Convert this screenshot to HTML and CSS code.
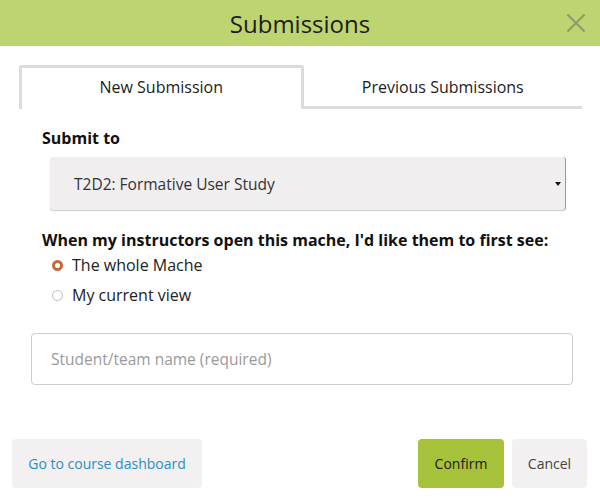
FILE: index.html
```html
<!DOCTYPE html>
<html>
<head>
<meta charset="utf-8">
<link rel="stylesheet" href="styles.css">
</head>
<body>
<div class="modal">
  <header class="head">
    <h1 class="title">Submissions</h1>
    <span class="close" aria-label="close">
      <svg width="20" height="20" viewBox="0 0 20 20"><path d="M1.5 1.5L18.5 18.5M18.5 1.5L1.5 18.5" stroke="#8a9a6a" stroke-width="2" fill="none"/></svg>
    </span>
  </header>
  <div class="tabs">
    <div class="tab active">New Submission</div>
    <div class="tab">Previous Submissions</div>
  </div>
  <div class="body">
    <div class="label">Submit to</div>
    <div class="select"><span>T2D2: Formative User Study</span><span class="caret"></span></div>
    <div class="label q">When my instructors open this mache, I'd like them to first see:</div>
    <div class="radio"><span class="dot on"></span>The whole Mache</div>
    <div class="radio"><span class="dot"></span>My current view</div>
  </div>
  <div class="input">Student/team name (required)</div>
  <footer class="foot">
    <button class="btn link">Go to course dashboard</button>
    <span class="spacer"></span>
    <button class="btn confirm">Confirm</button>
    <button class="btn cancel">Cancel</button>
  </footer>
</div>
</body>
</html>
```
FILE: styles.css
```css
* { box-sizing: border-box; }
html, body { margin: 0; padding: 0; background: #fff; }
body { font-family: "Open Sans", "Noto Sans", sans-serif; color: #222; width: 600px; height: 500px; overflow: hidden; }
.modal { display: flex; flex-direction: column; }
.head { height: 46px; background: #bdd470; display: flex; align-items: center; justify-content: center; position: relative; }
.title { margin: 0; font-weight: 400; font-size: 24px; color: #1c1c1c; }
.close { position: absolute; right: 14px; top: 13px; width: 20px; height: 20px; }
.tabs { display: flex; margin: 19px 18px 0 19px; height: 44px; }
.tab { flex: 1; display: flex; align-items: flex-start; justify-content: center; font-size: 16px; color: #1c1c1c; border-bottom: 3px solid #dcdcdc; padding-top: 11px; }
.tab.active { border: 3px solid #dcdcdc; border-bottom: none; border-radius: 3px 3px 0 0; padding-top: 8px; }
.body { padding: 19px 0 0 42px; }
.label { font-weight: 700; font-size: 16px; color: #111; height: 20px; line-height: 20px; }
.select { margin: 9px 0 0 8px; width: 516px; height: 53px; background: #f0eeee; border-right: 1px solid #9a9a9a; border-radius: 3px; box-shadow: 0 1px 1px #ccc; display: flex; align-items: center; justify-content: space-between; padding: 0 4px 0 24px; font-size: 15.5px; color: #333; }
.caret { width: 0; height: 0; border-left: 3px solid transparent; border-right: 3px solid transparent; border-top: 4px solid #111; }
.q { margin-top: 20px; }
.radio { display: flex; align-items: center; font-size: 16px; color: #222; height: 30px; margin-left: 10px; }
.dot { width: 11px; height: 11px; border-radius: 50%; border: 1px solid #bbb; background: #fff; margin-right: 9px; margin-top: 1px; }
.dot.on { border: 3px solid #c4693a; background: #fff; }
.input { margin: 23px 27px 0 31px; height: 52px; border: 1px solid #cfcccc; border-radius: 4px; display: flex; align-items: center; padding-left: 19px; font-size: 15.5px; color: #9a9a9a; }
.foot { display: flex; margin: 54px 13px 0 12px; height: 49px; gap: 8px; }
.spacer { flex: 1; }
.btn { border: none; border-radius: 4px; font-family: inherit; font-size: 14px; padding: 0; height: 49px; }
.link { width: 190px; background: #f2f0f0; color: #2b8ec6; }
.confirm { width: 86px; background: #a6c23a; color: #1a1a1a; }
.cancel { width: 75px; background: #f2f0f0; color: #444; }
```
